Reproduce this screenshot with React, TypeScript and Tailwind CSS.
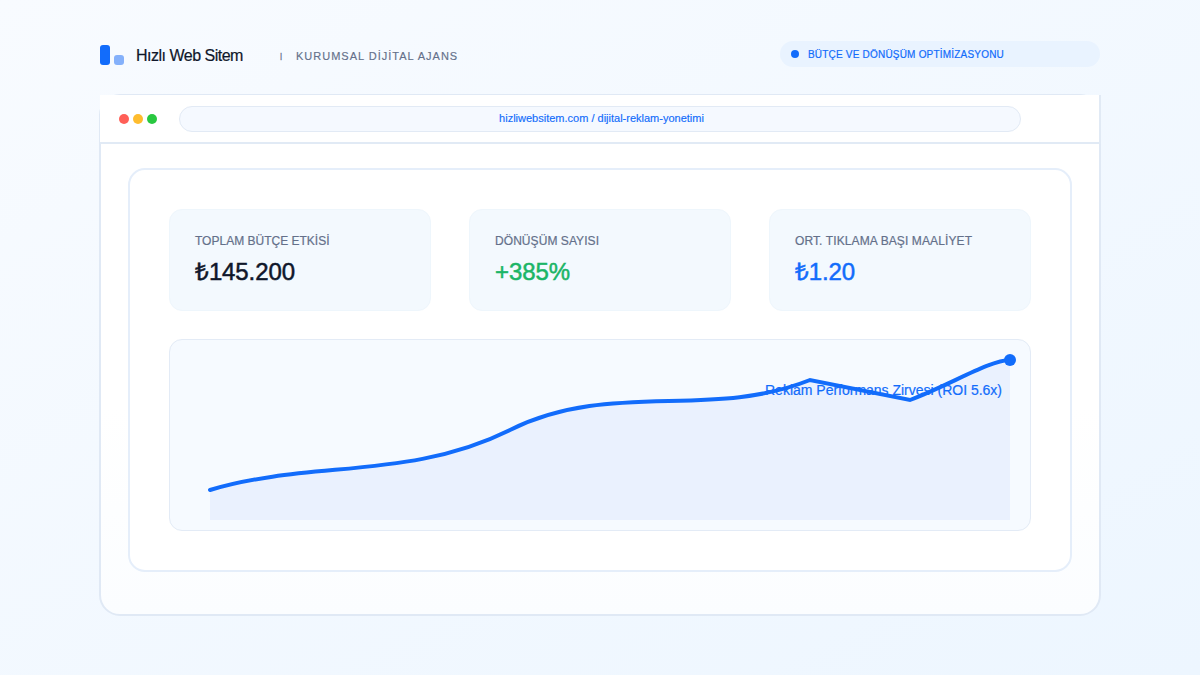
type Metric = { label: string; value: string; tone: string; labelWidth: number; valueWidth: number };

const metrics: Metric[] = [
  { label: 'TOPLAM BÜTÇE ETKİSİ', value: '₺145.200', tone: 'text-[#0f172a]', labelWidth: 134.5, valueWidth: 100 },
  { label: 'DÖNÜŞÜM SAYISI', value: '+385%', tone: 'text-[#1bb567]', labelWidth: 104, valueWidth: 75 },
  { label: 'ORT. TIKLAMA BAŞI MAALİYET', value: '₺1.20', tone: 'text-[#126cfb]', labelWidth: 177, valueWidth: 60 },
];

const curve = 'M40 150C140 120 240 140 340 90C440 40 540 80 640 40L740 60C780 45 820 20 840 20';

function Header() {
  return (
    <header className="flex h-[94px] items-start px-[100px]">
      <div className="mt-[45px] flex h-5 items-end gap-1">
        <span className="h-5 w-2.5 rounded-[3px] bg-[#126cfb]" />
        <span className="h-2.5 w-2.5 rounded-[3px] bg-[#85b1fb]" />
      </div>
      <span className="mt-[46px] ml-3 w-[144px] text-[16px] leading-5 tracking-[-0.5px] whitespace-nowrap text-[#0f172a] [-webkit-text-stroke:0.2px_currentColor]">
        Hızlı Web Sitem
      </span>
      <span className="mt-[49px] w-4 text-[8px] leading-[14px] text-[#64708a] [-webkit-text-stroke:0.3px_currentColor]">|</span>
      <span className="mt-[49px] text-[11px] leading-[14px] tracking-[1px] whitespace-nowrap text-[#64708a] [-webkit-text-stroke:0.15px_currentColor]">
        KURUMSAL DİJİTAL AJANS
      </span>
      <div className="mt-[41px] ml-auto flex h-[26px] w-[320px] items-center gap-[9px] rounded-full bg-[#e9f3ff] pl-[11px]">
        <span className="h-2 w-2 rounded-full bg-[#126cfb]" />
        <span className="pt-[2px] text-[10px] leading-3 tracking-[0.2px] whitespace-nowrap text-[#126cfb] [-webkit-text-stroke:0.2px_currentColor]">
          BÜTÇE VE DÖNÜŞÜM OPTİMİZASYONU
        </span>
      </div>
    </header>
  );
}

function BrowserBar() {
  return (
    <div className="-mt-px -mr-[2px] -ml-px flex h-[49px] items-start border-r-2 border-b-2 border-[#e1eaf5] bg-white pt-[11px] pl-[19px]">
      <div className="mt-2 flex gap-1">
        <span className="h-2.5 w-2.5 rounded-full bg-[#ff5f57]" />
        <span className="h-2.5 w-2.5 rounded-full bg-[#febc2e]" />
        <span className="h-2.5 w-2.5 rounded-full bg-[#28c840]" />
      </div>
      <div className="ml-[22px] flex h-[26px] w-[842px] items-center justify-center rounded-full border border-[#e2eaf5] bg-[#f5f9ff] pb-[2px] pl-[3px] text-[11px] text-[#126cfb] [-webkit-text-stroke:0.15px_currentColor]">
        hizliwebsitem.com / dijital-reklam-yonetimi
      </div>
    </div>
  );
}

function MetricCard({ metric }: { metric: Metric }) {
  return (
    <div className="h-[102px] w-[262px] rounded-[13px] border border-[#eef6fc] bg-[#f3f9fe]">
      <svg width="260" height="100" className={`block ${metric.tone}`}>
        <text x="25" y="35" textLength={metric.labelWidth} strokeWidth="0.2" className="fill-[#64708a] stroke-[#64708a] text-[12px]">
          {metric.label}
        </text>
        <text x="25" y="70" textLength={metric.valueWidth} strokeWidth="0.5" className="fill-current stroke-current text-[24px]">
          {metric.value}
        </text>
      </svg>
    </div>
  );
}

function PerformanceChart() {
  return (
    <div className="mt-7 h-[192px] w-[862px] rounded-[13px] border-[1.5px] border-[#e3ebf6] bg-[#f6faff]">
      <svg width="860" height="190" viewBox="0 0 860 190" className="block overflow-visible">
        <path d={`${curve}V180H40Z`} fill="#eaf1fe" />
        <path d={curve} fill="none" stroke="#126cfb" strokeWidth="4" strokeLinecap="round" />
        <circle cx="840" cy="20" r="6" fill="#126cfb" />
        <text x="595" y="55" textLength="237" strokeWidth="0.2" className="fill-[#126cfb] stroke-[#126cfb] text-[14px]">
          Reklam Performans Zirvesi (ROI 5.6x)
        </text>
      </svg>
    </div>
  );
}

export default function App() {
  return (
    <div className="h-[675px] w-[1200px] overflow-hidden bg-linear-to-br from-[#f8fbff] to-[#edf6ff] font-['Liberation_Sans',sans-serif]">
      <Header />
      <main className="mx-[99px] h-[522px] rounded-[21px] border-2 border-[#e0e9f5] bg-linear-to-b from-white from-60% to-[#fbfdff]">
        <BrowserBar />
        <section className="mt-[24px] ml-[27px] h-[404px] w-[944px] rounded-[17px] border-2 border-[#e5eefa] bg-white px-[39px] pt-[39px]">
          <div className="flex gap-[38px]">
            {metrics.map((metric) => (
              <MetricCard key={metric.label} metric={metric} />
            ))}
          </div>
          <PerformanceChart />
        </section>
      </main>
    </div>
  );
}
